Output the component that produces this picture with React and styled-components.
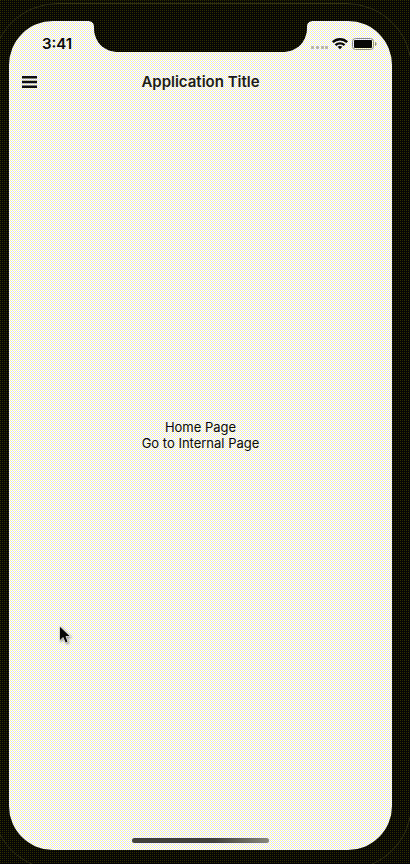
import React from "react";
import styled, { createGlobalStyle, css } from "styled-components";

const GlobalStyle = createGlobalStyle`
  *, *::before, *::after { box-sizing: border-box; }
  body { margin: 0; background: #0d0d08; }
`;

const dot = (color, x, y) =>
  `conic-gradient(from 270deg at 1px 1px, ${color} 90deg, transparent 0) ${x}px ${y}px / 4px 4px`;

const lightTexture = css`
  background:
    ${dot("#ffff99", 1, 1)},
    ${dot("#ffff99", 3, 3)},
    ${dot("#f0f0a8", 1, 3)},
    ${dot("#f0f0a8", 3, 1)},
    ${dot("#d8d8ff", 0, 0)},
    ${dot("#d8d8ff", 2, 2)},
    ${dot("#d8d8ff", 0, 2)},
    ${dot("#d8d8ff", 2, 0)},
    #ffffff;
`;

const darkTexture = (shift) => css`
  background:
    ${dot("#333300", shift, shift)},
    ${dot("#333300", shift + 2, shift + 2)},
    ${dot("#2a2a00", shift, shift + 2)},
    ${dot("#2a2a00", shift + 2, shift)},
    #060606;
`;

const Bezel = styled.div`
  position: relative;
  display: flex;
  flex-direction: column;
  min-height: 100vh;
  padding: 21px 18px 14px 9px;
  overflow: hidden;
  font-family: Inter, "Liberation Sans", sans-serif;
  color: #0b0b0b;
  ${darkTexture(0)}

  &::before {
    content: "";
    position: absolute;
    inset: 3px -2px -6px -8px;
    border: 1px solid #2e2e14;
    border-radius: 66px;
  }
`;

const Screen = styled.div`
  position: relative;
  flex: 1;
  display: flex;
  flex-direction: column;
  overflow: hidden;
  border-radius: 44px;
  ${lightTexture}
`;

const StatusBar = styled.header`
  display: grid;
  grid-template-columns: minmax(0, 1fr) auto minmax(0, 1fr);
  height: 42px;
`;

const Clock = styled.time`
  padding: 14px 0 0 33px;
  font-size: 15px;
  line-height: 18px;
  font-weight: 600;
`;

const Notch = styled.div`
  width: 227px;
  height: 31px;
  clip-path: path("M0 0H227C222 0 220 2 220 6C220 21 210 31 195 31H32C17 31 7 21 7 6C7 2 5 0 0 0Z");
  ${darkTexture(1)}
`;

const StatusIcons = styled.div`
  display: flex;
  justify-content: flex-end;
  padding: 16px 15px 0 0;
`;

const StatusGlyphs = styled.svg`
  flex: none;
  width: 66px;
  height: 14px;
`;

const TitleBar = styled.div`
  display: grid;
  grid-template-columns: 40px 1fr 40px;
  align-items: center;
  height: 38px;
`;

const MenuButton = styled.button`
  display: flex;
  align-items: center;
  justify-content: center;
  width: 40px;
  height: 36px;
  padding: 0;
  border: 0;
  background: transparent;
`;

const MenuIcon = styled.svg`
  width: 15px;
  height: 12px;
`;

const Title = styled.h1`
  margin: 0;
  text-align: center;
  font-size: 15px;
  line-height: 20px;
  font-weight: 600;
  color: #1d1d18;
`;

const Content = styled.main`
  flex: 1;
  display: flex;
  flex-direction: column;
  align-items: center;
  justify-content: center;
  padding-bottom: 70px;
  font-size: 13px;
  line-height: 16px;
`;

const Label = styled.p`
  margin: 0;
`;

const PageLink = styled.a`
  color: inherit;
  text-decoration: none;
`;

const HomeIndicator = styled.div`
  align-self: center;
  width: 137px;
  height: 5px;
  margin-bottom: 7px;
  border-radius: 3px;
  background: linear-gradient(90deg, #42423c 60%, #88887a);
`;

const Pointer = styled.svg`
  position: absolute;
  left: 58px;
  top: 625px;
  width: 15px;
  height: 21px;
  filter: drop-shadow(1px 1px 1px #0006);
`;

export default function App() {
  return (
    <Bezel>
      <GlobalStyle />
      <Screen>
        <StatusBar>
          <Clock>3:41</Clock>
          <Notch />
          <StatusIcons>
            <StatusGlyphs viewBox="0 0 66 14" role="img" aria-label="Wi-Fi connected, battery full">
              <g fill="#b4b3a8">
                <rect x="0" y="9" width="3" height="3" rx="1" />
                <rect x="5" y="9" width="3" height="3" rx="1" />
                <rect x="10" y="9" width="3" height="3" rx="1" />
                <rect x="14" y="9" width="3" height="3" rx="1" />
              </g>
              <g fill="none" stroke="#090909" strokeWidth="2.4">
                <path d="M21.8 5.2C25.8 1.2 32.2 1.2 36.2 5.2" />
                <path d="M24.5 8.2C27 5.8 31 5.8 33.5 8.2" />
              </g>
              <path d="M26.6 9.8C28 8.6 30 8.6 31.4 9.8L29 12.2Z" fill="#090909" />
              <rect x="41.5" y="1.5" width="21" height="11" rx="3" fill="none" stroke="#8c8c84" />
              <rect x="43" y="3" width="18" height="8" rx="1" fill="#080808" />
              <path d="M64 5C66 5.5 66 8.5 64 9Z" fill="#8c8c84" />
            </StatusGlyphs>
          </StatusIcons>
        </StatusBar>
        <TitleBar>
          <MenuButton type="button" aria-label="Open menu">
            <MenuIcon viewBox="0 0 15 12" aria-hidden="true">
              <path d="M0 1.2H15M0 6H15M0 10.8H15" stroke="#111111" strokeWidth="2.4" />
            </MenuIcon>
          </MenuButton>
          <Title>Application Title</Title>
        </TitleBar>
        <Content>
          <Label>Home Page</Label>
          <PageLink href="#internal">Go to Internal Page</PageLink>
        </Content>
        <HomeIndicator />
      </Screen>
      <Pointer viewBox="0 0 15 21" aria-hidden="true">
        <path d="M1.5 1V16L5 12.5L7.5 18L10 17L8 11.5H12.5Z" fill="#080808" stroke="#fff" strokeWidth="0.7" />
      </Pointer>
    </Bezel>
  );
}
